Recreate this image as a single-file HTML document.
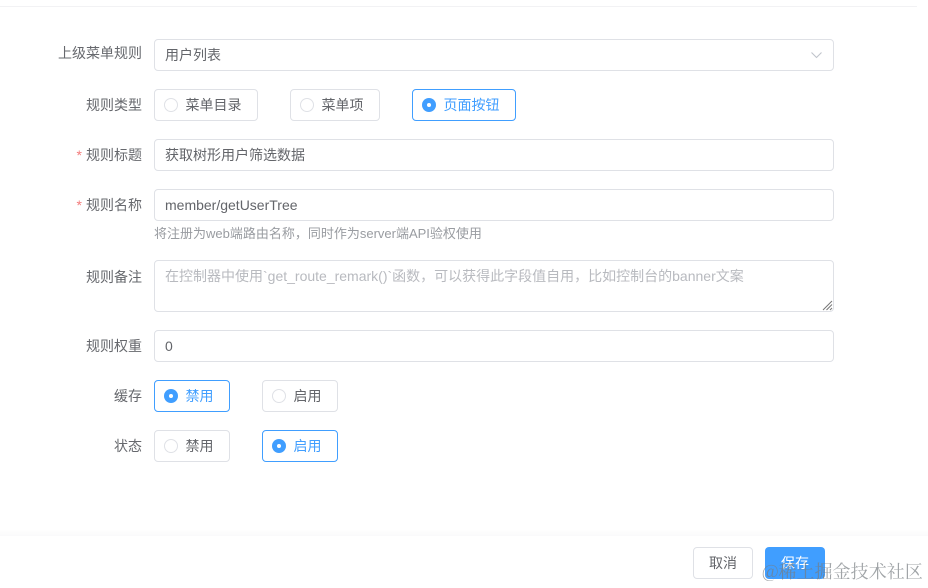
<!DOCTYPE html>
<html lang="zh">
<head>
<meta charset="utf-8">
<style>
html,body{margin:0;padding:0;width:928px;height:588px;overflow:hidden;background:#fff}
body{font-family:"Liberation Sans","Noto Sans CJK SC",sans-serif;font-size:14px;color:#606266;position:relative}
.a{position:absolute;box-sizing:border-box}
.topline{left:0;top:6px;width:917px;height:1px;background:#f2f2f4}
.lbl{left:20px;width:122px;text-align:right;height:32px;line-height:30px;color:#66686d;white-space:nowrap}
.lbl i{font-style:normal;color:#f37b7b;margin-right:4px}
.inp{left:154px;width:680px;height:32px;border:1px solid #dfe1e6;border-radius:4px;line-height:30px;padding-left:10px;color:#63656a;background:#fff;white-space:nowrap}
.rad{height:32px;border:1px solid #dfe1e6;border-radius:4px;line-height:30px;white-space:nowrap;color:#63656a;background:#fff}
.rad b{position:absolute;left:9px;top:8px;width:14px;height:14px;border:1px solid #dfe1e6;border-radius:50%;box-sizing:border-box;background:#fff}
.rad span{position:absolute;left:30.5px;top:0}
.rad.on{border-color:#409eff;color:#409eff}
.rad.on b{border:0;background:#409eff}
.rad.on b:after{content:"";position:absolute;left:5px;top:5px;width:4px;height:4px;background:#fff;border-radius:50%}
.tip{left:154px;top:225px;font-size:13px;line-height:18px;color:#999ca1;white-space:nowrap}
.ph{color:#b8babf}
.foot{left:0;top:530px;width:928px;height:6px;background:linear-gradient(#fefefe,#fafafb)}
.btn{top:547px;width:60px;height:32px;border-radius:4px;text-align:center;line-height:31px}
.wm{left:762px;top:559px;font-family:"Noto Serif CJK SC","Liberation Serif",serif;font-size:18px;line-height:24px;letter-spacing:0.05px;color:rgba(120,125,130,.7);white-space:nowrap}
</style>
</head>
<body>
<div class="a topline"></div>

<div class="a lbl" style="top:38px">上级菜单规则</div>
<div class="a inp" style="top:39px">用户列表
<svg class="a" style="left:655px;top:10px" width="14" height="10" viewBox="0 0 14 10"><path d="M1.5 2.5 L6.5 7.5 L11.5 2.5" fill="none" stroke="#c0c4cc" stroke-width="1.1"/></svg>
</div>

<div class="a lbl" style="top:90px">规则类型</div>
<div class="a rad" style="left:154px;top:89px;width:104px"><b></b><span>菜单目录</span></div>
<div class="a rad" style="left:290px;top:89px;width:90px"><b></b><span>菜单项</span></div>
<div class="a rad on" style="left:412px;top:89px;width:104px"><b></b><span>页面按钮</span></div>

<div class="a lbl" style="top:140px"><i>*</i>规则标题</div>
<div class="a inp" style="top:139px">获取树形用户筛选数据</div>

<div class="a lbl" style="top:190px"><i>*</i>规则名称</div>
<div class="a inp" style="top:189px">member/getUserTree</div>
<div class="a tip">将注册为web端路由名称，同时作为server端API验权使用</div>

<div class="a lbl" style="top:262px">规则备注</div>
<div class="a inp ph" style="top:260px;height:52px">在控制器中使用`get_route_remark()`函数，可以获得此字段值自用，比如控制台的banner文案
<svg class="a" style="left:665px;top:37px" width="13" height="13" viewBox="0 0 13 13"><path d="M12 3 L3 12 M12 6.5 L6.5 12 M12 10 L10 12" fill="none" stroke="#777" stroke-width="1"/></svg>
</div>

<div class="a lbl" style="top:331px">规则权重</div>
<div class="a inp" style="top:330px">0</div>

<div class="a lbl" style="top:381px">缓存</div>
<div class="a rad on" style="left:154px;top:380px;width:76px"><b></b><span>禁用</span></div>
<div class="a rad" style="left:262px;top:380px;width:76px"><b></b><span>启用</span></div>

<div class="a lbl" style="top:431px">状态</div>
<div class="a rad" style="left:154px;top:430px;width:76px"><b></b><span>禁用</span></div>
<div class="a rad on" style="left:262px;top:430px;width:76px"><b></b><span>启用</span></div>

<div class="a foot"></div>
<div class="a btn" style="left:693px;border:1px solid #dfe1e6;color:#63656a;background:#fff">取消</div>
<div class="a btn" style="left:765px;background:#409eff;color:#fff;line-height:33px">保存</div>
<div class="a wm">@稀土掘金技术社区</div>
</body>
</html>
